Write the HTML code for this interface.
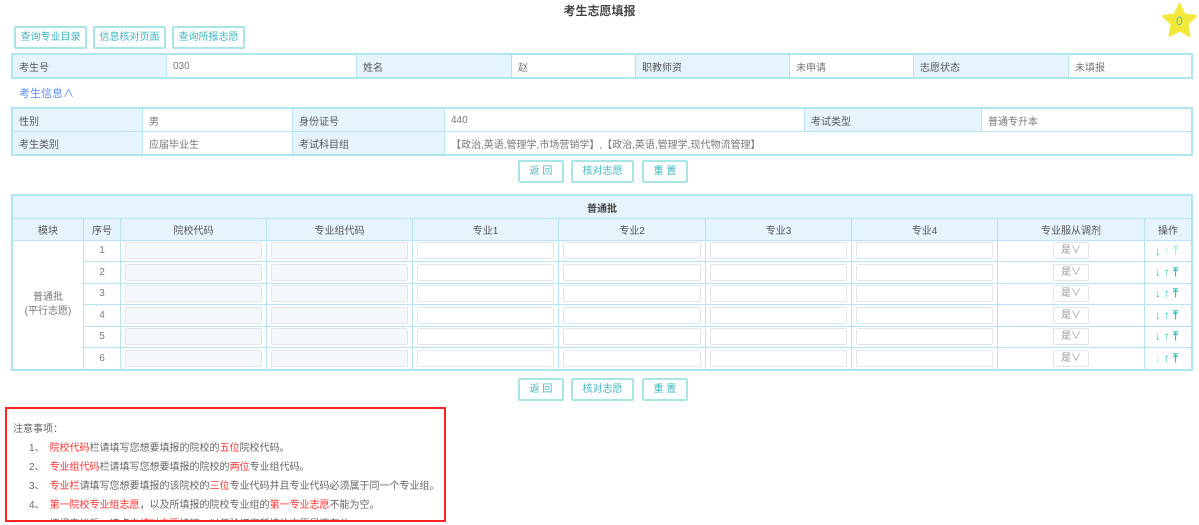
<!DOCTYPE html>
<html><head><meta charset="utf-8">
<style>
*{box-sizing:border-box;margin:0;padding:0}
body{width:1199px;height:525px;overflow:hidden;background:#fff;font-family:"Liberation Sans","Noto Sans CJK SC",sans-serif;font-size:10px;color:#555;position:relative}
.a{position:absolute}
.btn{position:absolute;border:2px solid #a8e6e6;color:#3fb8c0;font-size:10px;text-align:center;border-radius:2px;background:#fff}
table{border-collapse:collapse;table-layout:fixed;position:absolute}
td{border:1px solid #b8e3f7;height:23px;padding:0 6px;white-space:nowrap;overflow:hidden;color:#777;vertical-align:middle}
td.l{background:#e6f4fd;color:#555}
.tb{outline:2px solid #aee6ef;outline-offset:-1px}
.g td{height:21.5px;text-align:center;padding:0}
.c{height:20.5px;display:flex;align-items:center;justify-content:center}
.g .inp{margin:0 4px;width:100%;height:17px;border:1px solid #e2e6ea;border-radius:2px;background:#fff}
.g .dis{background:#f4f8fb}
.sel{display:block;width:36px;height:17px;border:1px solid #e2e6ea;border-radius:2px;line-height:15px;font-size:10px;color:#999}
.ops{color:#2cc4b8;font-size:12px;font-weight:bold;letter-spacing:3px}
.r{color:#f33}
.n p{height:19px;line-height:19px;padding-left:22px}
</style></head><body>
<div class="a" style="left:0;width:1199px;top:2px;text-align:center;font-size:12px;font-weight:bold;color:#444">考生志愿填报</div>
<svg class="a" style="left:1161px;top:2px" width="37" height="37" viewBox="0 0 37 37"><polygon points="18.5,2 23.5,12.5 35,14 26.5,22 28.5,34 18.5,28.5 8.5,34 10.5,22 2,14 13.5,12.5" fill="#f2e93a" stroke="#f2e93a" stroke-width="2" stroke-linejoin="round"/><text x="18.5" y="23" text-anchor="middle" font-size="12" fill="#4cc3b8" font-family="Liberation Sans">0</text></svg>

<div class="btn" style="left:14px;top:26px;width:73px;height:23px;line-height:19px">查询专业目录</div>
<div class="btn" style="left:93px;top:26px;width:73px;height:23px;line-height:19px">信息核对页面</div>
<div class="btn" style="left:172px;top:26px;width:73px;height:23px;line-height:19px">查询所报志愿</div>

<table class="tb" style="left:12px;top:54px;width:1179px">
<colgroup><col style="width:154px"><col style="width:190px"><col style="width:155px"><col style="width:124px"><col style="width:154px"><col style="width:124px"><col style="width:155px"><col style="width:123px"></colgroup>
<tr><td class="l">考生号</td><td>030</td><td class="l">姓名</td><td>赵</td><td class="l">职教师资</td><td>未申请</td><td class="l">志愿状态</td><td>未填报</td></tr>
</table>
<div class="a" style="left:19px;top:85px;color:#5b8ef0;font-size:11px">考生信息∧</div>

<table class="tb" style="left:12px;top:108px;width:1179px">
<colgroup><col style="width:130px"><col style="width:150px"><col style="width:152px"><col style="width:360px"><col style="width:177px"><col style="width:210px"></colgroup>
<tr><td class="l">性别</td><td>男</td><td class="l">身份证号</td><td>440</td><td class="l">考试类型</td><td>普通专升本</td></tr>
<tr><td class="l">考生类别</td><td>应届毕业生</td><td class="l">考试科目组</td><td colspan="3">【政治,英语,管理学,市场营销学】,【政治,英语,管理学,现代物流管理】</td></tr>
</table>

<div class="btn" style="left:518px;top:160px;width:46px;height:23px;line-height:19px">返 回</div>
<div class="btn" style="left:571px;top:160px;width:63px;height:23px;line-height:19px">核对志愿</div>
<div class="btn" style="left:642px;top:160px;width:46px;height:23px;line-height:19px">重 置</div>

<table class="tb g" style="left:12px;top:195px;width:1179px">
<colgroup><col style="width:71px"><col style="width:37px"><col style="width:146px"><col style="width:146px"><col style="width:146px"><col style="width:147px"><col style="width:146px"><col style="width:146px"><col style="width:147px"><col style="width:47px"></colgroup>
<tr><td colspan="10" class="l" style="height:23px;font-weight:bold;color:#444">普通批</td></tr>
<tr class="h"><td class="l">模块</td><td class="l">序号</td><td class="l">院校代码</td><td class="l">专业组代码</td><td class="l">专业1</td><td class="l">专业2</td><td class="l">专业3</td><td class="l">专业4</td><td class="l">专业服从调剂</td><td class="l">操作</td></tr>
<tr><td rowspan="6" style="color:#777;line-height:14px">普通批<br>(平行志愿)</td><td><div class="c">1</div></td><td><div class="c"><div class="inp dis"></div></div></td><td><div class="c"><div class="inp dis"></div></div></td><td><div class="c"><div class="inp"></div></div></td><td><div class="c"><div class="inp"></div></div></td><td><div class="c"><div class="inp"></div></div></td><td><div class="c"><div class="inp"></div></div></td><td><div class="c"><span class="sel">是∨</span></div></td><td class="ops"><div class="c">↓<span style="opacity:.35">↑⤒</span></div></td></tr>
<tr><td><div class="c">2</div></td><td><div class="c"><div class="inp dis"></div></div></td><td><div class="c"><div class="inp dis"></div></div></td><td><div class="c"><div class="inp"></div></div></td><td><div class="c"><div class="inp"></div></div></td><td><div class="c"><div class="inp"></div></div></td><td><div class="c"><div class="inp"></div></div></td><td><div class="c"><span class="sel">是∨</span></div></td><td class="ops"><div class="c">↓↑⤒</div></td></tr>
<tr><td><div class="c">3</div></td><td><div class="c"><div class="inp dis"></div></div></td><td><div class="c"><div class="inp dis"></div></div></td><td><div class="c"><div class="inp"></div></div></td><td><div class="c"><div class="inp"></div></div></td><td><div class="c"><div class="inp"></div></div></td><td><div class="c"><div class="inp"></div></div></td><td><div class="c"><span class="sel">是∨</span></div></td><td class="ops"><div class="c">↓↑⤒</div></td></tr>
<tr><td><div class="c">4</div></td><td><div class="c"><div class="inp dis"></div></div></td><td><div class="c"><div class="inp dis"></div></div></td><td><div class="c"><div class="inp"></div></div></td><td><div class="c"><div class="inp"></div></div></td><td><div class="c"><div class="inp"></div></div></td><td><div class="c"><div class="inp"></div></div></td><td><div class="c"><span class="sel">是∨</span></div></td><td class="ops"><div class="c">↓↑⤒</div></td></tr>
<tr><td><div class="c">5</div></td><td><div class="c"><div class="inp dis"></div></div></td><td><div class="c"><div class="inp dis"></div></div></td><td><div class="c"><div class="inp"></div></div></td><td><div class="c"><div class="inp"></div></div></td><td><div class="c"><div class="inp"></div></div></td><td><div class="c"><div class="inp"></div></div></td><td><div class="c"><span class="sel">是∨</span></div></td><td class="ops"><div class="c">↓↑⤒</div></td></tr>
<tr><td><div class="c">6</div></td><td><div class="c"><div class="inp dis"></div></div></td><td><div class="c"><div class="inp dis"></div></div></td><td><div class="c"><div class="inp"></div></div></td><td><div class="c"><div class="inp"></div></div></td><td><div class="c"><div class="inp"></div></div></td><td><div class="c"><div class="inp"></div></div></td><td><div class="c"><span class="sel">是∨</span></div></td><td class="ops"><div class="c"><span style="opacity:.35">↓</span>↑⤒</div></td></tr>
</table>

<div class="btn" style="left:518px;top:378px;width:46px;height:23px;line-height:19px">返 回</div>
<div class="btn" style="left:571px;top:378px;width:63px;height:23px;line-height:19px">核对志愿</div>
<div class="btn" style="left:642px;top:378px;width:46px;height:23px;line-height:19px">重 置</div>

<div class="a n" style="left:5px;top:407px;width:441px;height:115px;border:2px solid #f22;overflow:hidden;color:#666">
<div style="padding:11px 0 0 6px;height:30px;line-height:19px">注意事项：</div>
<p>1、　<span class="r">院校代码</span>栏请填写您想要填报的院校的<span class="r">五位</span>院校代码。</p>
<p>2、　<span class="r">专业组代码</span>栏请填写您想要填报的院校的<span class="r">两位</span>专业组代码。</p>
<p>3、　<span class="r">专业栏</span>请填写您想要填报的该院校的<span class="r">三位</span>专业代码并且专业代码必须属于同一个专业组。</p>
<p>4、　<span class="r">第一院校专业组志愿</span>，以及所填报的院校专业组的<span class="r">第一专业志愿</span>不能为空。</p>
<p>5、　填报完毕后，请点击<span class="r">核对志愿</span>按钮，以便验证您所填的志愿是否有效。</p>
</div>
</body></html>
